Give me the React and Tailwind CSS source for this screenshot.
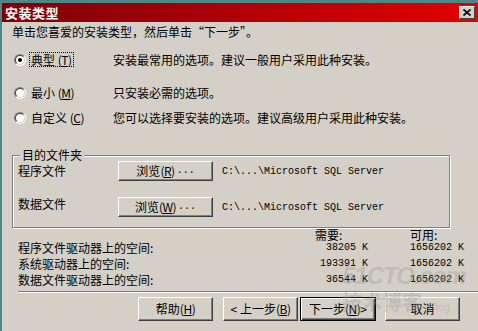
const cjk = "font-['Noto_Sans_CJK_SC','Noto_Sans',sans-serif]";
const mono = "font-['Liberation_Mono',monospace]";

const Radio = ({ checked }) => (
   <span className="w-[12px] h-[12px] rounded-full border border-t-[#808080] border-l-[#808080] border-r-white border-b-white flex">
      <span className="flex-1 rounded-full bg-white border border-t-[#404040] border-l-[#404040] border-r-[#d4d0c8] border-b-[#d4d0c8] flex items-center justify-center">
         {checked && <span className="w-[4px] h-[4px] rounded-full bg-black" />}
      </span>
   </span>
);

const Btn = ({ children, isDefault, className = "" }) => (
   <button
      className={
         "flex items-center justify-center text-[12px] leading-none text-black bg-[#d4d0c8] " +
         (isDefault
            ? "border border-black shadow-[inset_1px_1px_0_#fff,inset_-1px_-1px_0_#404040,inset_-2px_-2px_0_#808080] "
            : "border border-t-white border-l-white border-r-[#404040] border-b-[#404040] shadow-[inset_-1px_-1px_0_#808080] ") +
         className
      }
   >
      {children}
   </button>
);

const M = ({ c }) => (
   <span className="tracking-[-0.5px]">
      (<u className="underline-offset-[1px]">{c}</u>)
   </span>
);

export default function App() {
   return (
      <div className={`relative w-[478px] h-[331px] overflow-hidden bg-[#d4d0c8] border-t-[3px] border-l-[2px] border-[#4f8787] text-black text-[12px] flex flex-col ${cjk}`}>
         {/* title bar */}
         <div className="h-[19px] flex items-center justify-between bg-linear-to-r from-[#7c0008] via-[#b00008] to-[#e40000]">
            <span className="pl-[3px] text-white font-bold text-[13px] leading-none tracking-[0.5px]">安装类型</span>
            <span className="mr-[3px] w-[16px] h-[13px] bg-[#d4d0c8] border border-t-white border-l-white border-r-[#404040] border-b-[#404040] flex items-center justify-center">
               <svg width="8" height="7" viewBox="0 0 8 7">
                  <path d="M0.5 0.5 L7.5 6.5 M7.5 0.5 L0.5 6.5" stroke="#000" strokeWidth="1.6" />
               </svg>
            </span>
         </div>

         <div className="mt-[3px] pl-[10px] h-[14px] leading-[14px]">单击您喜爱的安装类型，然后单击“下一步”。</div>

         {/* options */}
         <div className="mt-[13px] pl-[12px] h-[16px] flex items-center">
            <Radio checked />
            <span className="ml-[3px] w-[84px]">
               <span className="inline-block border border-dotted border-black px-[1px] leading-[13px]">典型 <M c="T" /></span>
            </span>
            <span>安装最常用的选项。建议一般用户采用此种安装。</span>
         </div>
         <div className="mt-[17px] pl-[12px] h-[16px] flex items-center">
            <Radio />
            <span className="ml-[3px] w-[84px] pl-[2px]">最小 <M c="M" /></span>
            <span>只安装必需的选项。</span>
         </div>
         <div className="mt-[9px] pl-[12px] h-[16px] flex items-center">
            <Radio />
            <span className="ml-[3px] w-[84px] pl-[2px]">自定义 <M c="C" /></span>
            <span>您可以选择要安装的选项。建议高级用户采用此种安装。</span>
         </div>

         {/* destination group */}
         <div className="relative mt-[29px] ml-[10px] w-[438px] h-[73px] border border-[#808080] shadow-[1px_1px_0_#fff,inset_1px_1px_0_#fff] flex flex-col pt-[5px] pl-[5px]">
            <span className="absolute -top-[8px] left-[7px] px-[2px] bg-[#d4d0c8] leading-[14px]">目的文件夹</span>
            <div className="h-[20px] flex items-center">
               <span className="w-[100px]">程序文件</span>
               <Btn className="w-[95px] h-[20px]">浏览 <M c="R" /><span className={`${mono} text-[10px] ml-[2px]`}>...</span></Btn>
               <span className={`ml-[9px] ${mono} text-[10px]`}>C:\...\Microsoft SQL Server</span>
            </div>
            <div className="mt-[16px] h-[20px] flex items-center">
               <span className="w-[100px] -mt-[6px]">数据文件</span>
               <Btn className="w-[95px] h-[20px]">浏览 <M c="W" /><span className={`${mono} text-[10px] ml-[2px]`}>...</span></Btn>
               <span className={`ml-[9px] ${mono} text-[10px]`}>C:\...\Microsoft SQL Server</span>
            </div>
         </div>

         {/* disk space */}
         <div className="mt-[2px] pl-[16px] grid grid-cols-[297px_53px_42px_54px] leading-none">
            <span className="h-[10px]" />
            <span className="h-[10px] leading-[10px]">需要:</span>
            <span />
            <span className="h-[10px] leading-[10px]">可用:</span>

            <span className="h-[16px] flex items-center">程序文件驱动器上的空间:</span>
            <span className={`h-[16px] flex items-center justify-end ${mono} text-[10px]`}>38205 K</span>
            <span />
            <span className={`h-[16px] flex items-center justify-end ${mono} text-[10px]`}>1656202 K</span>

            <span className="h-[16px] flex items-center">系统驱动器上的空间:</span>
            <span className={`h-[16px] flex items-center justify-end ${mono} text-[10px]`}>193391 K</span>
            <span />
            <span className={`h-[16px] flex items-center justify-end ${mono} text-[10px]`}>1656202 K</span>

            <span className="h-[16px] flex items-center">数据文件驱动器上的空间:</span>
            <span className={`h-[16px] flex items-center justify-end ${mono} text-[10px]`}>36544 K</span>
            <span />
            <span className={`h-[16px] flex items-center justify-end ${mono} text-[10px]`}>1656202 K</span>
         </div>

         <div className="mt-[3px] ml-[16px] h-[2px] border-t border-t-[#808080] border-b border-b-white" />

         {/* buttons */}
         <div className="mt-[4px] ml-[136px] flex">
            <Btn className="w-[75px] h-[24px]">帮助 <M c="H" /></Btn>
            <Btn className="ml-[10px] w-[75px] h-[24px]">&lt; 上一步 <M c="B" /></Btn>
            <Btn isDefault className="ml-[2px] w-[76px] h-[24px]">下一步 <M c="N" /> &gt;</Btn>
            <Btn className="ml-[9px] w-[75px] h-[24px]">取消</Btn>
         </div>

         {/* watermark */}
         <div className="absolute left-[340px] top-[260px] pointer-events-none flex flex-col items-start opacity-35">
            <span className="font-['Liberation_Sans',sans-serif] font-bold italic text-[24px] leading-[26px] text-[#9a9a9a] tracking-[-1px]">51CTO.com</span>
            <span className="flex items-end">
               <span className="text-[20px] leading-[26px] text-[#9a9a9a] font-bold">技术博客</span>
               <span className="ml-[6px] font-['Liberation_Sans',sans-serif] text-[11px] text-[#9a9a9a]">Blog</span>
            </span>
         </div>
      </div>
   );
}
